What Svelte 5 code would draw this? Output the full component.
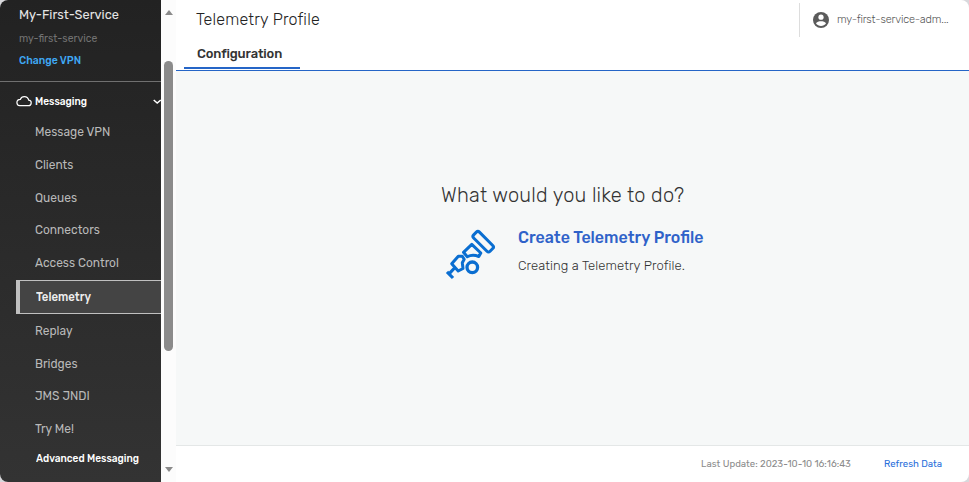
<script>
  const items = [
    { label: 'Message VPN', h: 33 },
    { label: 'Clients', h: 33 },
    { label: 'Queues', h: 33 },
    { label: 'Connectors', h: 32, raised: true },
    { label: 'Access Control', h: 34, raised: true },
    { label: 'Telemetry', h: 34, active: true, raised: true },
    { label: 'Replay', h: 33 },
    { label: 'Bridges', h: 33 },
    { label: 'JMS JNDI', h: 32, raised: true },
    { label: 'Try Me!', h: 33 }
  ];
</script>

<div class="frame">
  <aside>
    <header class="service">
      <div class="name"><span>My-First-Service</span></div>
      <div class="vpn"><span>my-first-service</span></div>
      <div class="change"><span>Change VPN</span></div>
    </header>
    <div class="group">
      <svg class="cloud" width="16" height="12" viewBox="0 0 16 12"><path d="M3.700 10.600H12.300A2.700 2.700 0 0 0 12.700 5.200C12.200 3 10.500 1.600 8.300 1.600C6.500 1.600 5 2.600 4.400 4.300C2.200 4.400 .900 5.800 .900 7.500C.900 9.200 2.100 10.600 3.700 10.600Z" fill="none" stroke="#fff" stroke-width="1.200" /></svg>
      <span class="grouplabel">Messaging</span>
      <svg class="chev" width="8" height="6" viewBox="0 0 8 6"><path d="M.7 2L4.200 5L7.700 2" fill="none" stroke="#fff" stroke-width="1.500" /></svg>
    </div>
    <nav>
      {#each items as it}
        <div class="item" class:active={it.active} class:raised={it.raised} style="height:{it.h}px"><span>{it.label}</span></div>
      {/each}
    </nav>
    <div class="advanced"><span>Advanced Messaging</span></div>
  </aside>
  <div class="scroll">
    <i class="up"></i>
    <i class="thumb"></i>
    <i class="down"></i>
  </div>
  <main>
    <header class="top">
      <div class="left">
        <h1><span>Telemetry Profile</span></h1>
        <div class="tab"><span>Configuration</span></div>
      </div>
      <div class="user">
        <svg width="16" height="16" viewBox="0 0 16 16"><circle cx="8" cy="8" r="8" fill="#5b5b5b" /><circle cx="8" cy="5.200" r="2.600" fill="#fff" /><path d="M3 11.600C3.400 9.800 6.200 9.200 8 9.200C9.800 9.200 12.600 9.800 13 11.600C11.800 13.200 10 14 8 14C6 14 4.200 13.200 3 11.600Z" fill="#fff" /></svg>
        <span>my-first-service-adm...</span>
      </div>
    </header>
    <section>
      <h2><span>What would you like to do?</span></h2>
      <div class="choice">
        <svg width="60" height="60" viewBox="0 0 60 60" fill="none" stroke="#0a6ed1" stroke-width="3" stroke-linejoin="round">
          <rect x="-11.600" y="-4.100" width="23.200" height="8.200" rx="2.200" transform="translate(43.200 16.700) rotate(45)" />
          <path d="M31.800 19.300L23.500 27.300L27.300 31.800Q32.500 29 38.800 31.500L40.800 28Z" />
          <path d="M18.300 31.300L11.700 38.800L18.200 46L23 43.500L22.300 37.700L24.200 34.200L22.300 31.300Z" />
          <circle cx="32.300" cy="42.300" r="5.300" stroke-width="3.300" />
          <path d="M14.500 43L9.500 48.300M7 46.800L13 53" stroke-width="3.200" />
        </svg>
        <div class="words">
          <div class="create"><span>Create Telemetry Profile</span></div>
          <div class="desc"><span>Creating a Telemetry Profile.</span></div>
        </div>
      </div>
    </section>
    <footer>
      <span class="updated">Last Update: 2023-10-10 16:16:43</span>
      <span class="refresh">Refresh Data</span>
    </footer>
  </main>
</div>

<style>
  :global(body) { background: #d8d8dc; }
  .frame {
    width: 969px; height: 482px; display: flex; overflow: hidden; border-radius: 8px;
    background: #fff; font-family: Rubik, Roboto, sans-serif; white-space: nowrap;
  }
  aside {
    width: 161px; height: 482px; flex: none; overflow: hidden;
    background: linear-gradient(#222, #333);
  }
  aside span { display: inline-block; transform-origin: left center; transform: scaleX(.92); }
  .service { height: 82px; box-sizing: border-box; padding: 4px 0 0 19px; border-bottom: 1px solid #707070; }
  .name { height: 22px; line-height: 22px; font-size: 13px; color: #e6e6e6; }
  .name span { transform: scaleX(.98); }
  .vpn { height: 23px; line-height: 26px; font-size: 11px; color: #727272; }
  .vpn span { transform: scaleX(.945); }
  .change { height: 22px; line-height: 24px; font-size: 11px; font-weight: 500; color: #3fa9f5; }
  .change span { transform: scaleX(.95); }
  .group { height: 33px; display: flex; align-items: center; padding: 5px 0 0 16px; box-sizing: border-box; color: #fff; font-size: 11px; }
  .cloud { flex: none; margin-right: 3px; }
  .grouplabel { font-weight: 500; }
  .chev { margin-left: auto; flex: none; }
  .item { display: flex; align-items: center; padding-left: 35px; font-size: 13px; color: #b9b9b9; }
  .item.raised span { margin-bottom: 2px; }
  .item.active {
    margin-left: 16px; padding-left: 16px; box-sizing: border-box; background: #444; color: #eee; font-weight: 500;
    border: 1px solid #c0c0c0; border-left-width: 4px; border-right: 0;
  }
  .item.active span { transform: scaleX(.875); }
  .advanced { height: 28px; line-height: 28px; padding-left: 36px; font-size: 11px; font-weight: 500; color: #fff; }
  .scroll { width: 15px; flex: none; display: flex; flex-direction: column; align-items: center; background: #fcfcfc; }
  .up, .down { border: 4.500px solid transparent; border-top: 0; border-bottom: 5px solid #8a8a8a; margin-top: 10px; }
  .down { border-bottom: 0; border-top: 5px solid #8a8a8a; margin-top: 116px; }
  .thumb { width: 9px; height: 290px; margin-top: 46px; border-radius: 4.500px; background: #8b8b8b; }
  main { flex: 1; display: flex; flex-direction: column; }
  .top { height: 71px; box-sizing: border-box; border-bottom: 1px solid #2565c7; display: flex; justify-content: space-between; }
  .left { padding-left: 8px; }
  h1 { margin: 0; padding-left: 12px; height: 39px; line-height: 39px; font-size: 16px; font-weight: 300; letter-spacing: .2px; color: #222; }
  .tab { width: 116px; height: 30px; line-height: 29px; box-sizing: border-box; border-bottom: 2px solid #2565c7; padding-left: 13px; font-size: 13px; font-weight: 500; letter-spacing: -.14px; color: #333; }
  .user { width: 170px; height: 34px; box-sizing: border-box; margin-top: 3px; border-left: 1px solid #ddd; padding-left: 13px; display: flex; align-items: center; gap: 8px; font-size: 11px; font-weight: 300; color: #555; }
  .user span { letter-spacing: -.17px; margin-top: -1px; }
  section { flex: 1; background: #f6f8f8; padding: 108px 0 0 265px; }
  h2 { margin: 0; height: 32px; line-height: 32px; font-size: 20px; font-weight: 300; letter-spacing: .23px; color: #333; }
  .choice { display: flex; margin: 14px 0 0 -1px; }
  .words { padding-left: 18px; }
  .create { height: 26px; line-height: 26px; font-size: 16px; font-weight: 500; color: #2f62c9; }
  .desc { height: 28px; line-height: 30px; font-size: 13px; font-weight: 300; letter-spacing: .1px; color: #333; }
  footer { height: 37px; box-sizing: border-box; border-top: 1px solid #e4e7e7; display: flex; align-items: center; padding: 0 0 2px 525px; font-size: 9.600px; color: #8b8b8b; }
  .updated { width: 183px; }
  .refresh { color: #2a6fdb; }
</style>
